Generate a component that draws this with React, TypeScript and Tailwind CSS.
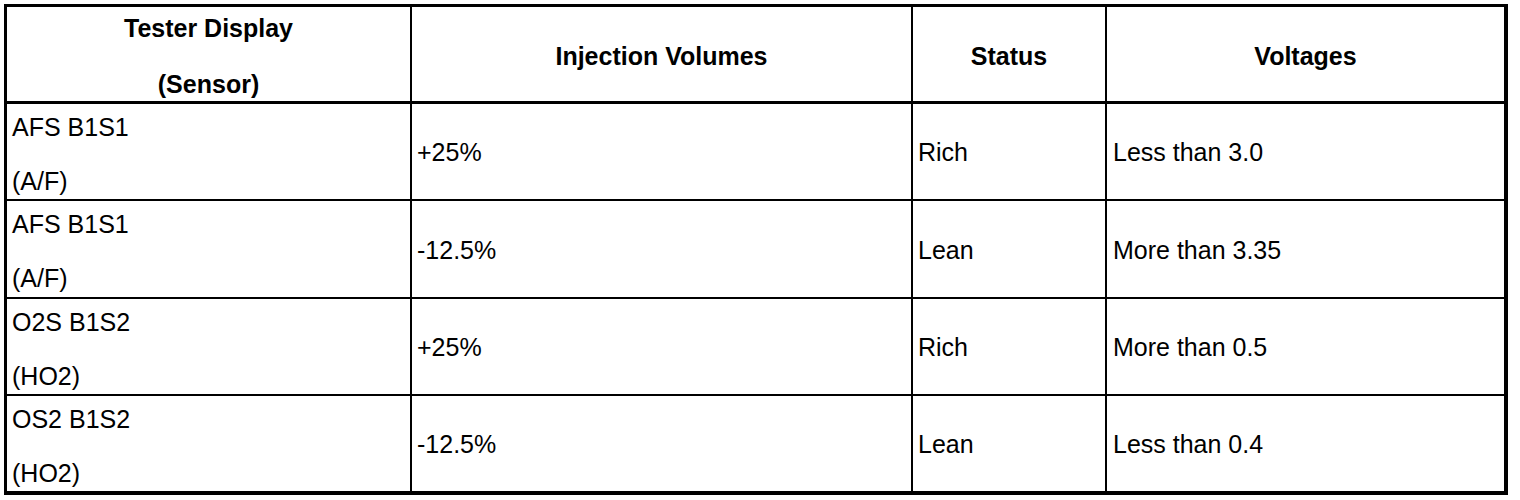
import React from "react";

type Row = { sensor: [string, string]; inj: string; status: string; volt: string };

const rows: Row[] = [
  { sensor: ["AFS B1S1", "(A/F)"], inj: "+25%", status: "Rich", volt: "Less than 3.0" },
  { sensor: ["AFS B1S1", "(A/F)"], inj: "-12.5%", status: "Lean", volt: "More than 3.35" },
  { sensor: ["O2S B1S2", "(HO2)"], inj: "+25%", status: "Rich", volt: "More than 0.5" },
  { sensor: ["OS2 B1S2", "(HO2)"], inj: "-12.5%", status: "Lean", volt: "Less than 0.4" },
];

export default function App() {
  return (
    <div className="w-[1520px] h-[500px] bg-white pt-[4px] pl-[4px] font-['Liberation_Sans',Arial,sans-serif] text-[25px] text-black">
      <div className="w-[1504px] border-l-[3px] border-t-[3px] border-r-[4px] border-b-[4px] border-black grid grid-cols-[405px_501px_194px_397px] grid-rows-[97px_97px_98px_97px_95px]">
        {/* header */}
        <div className="border-r-2 border-b-[3px] border-black flex flex-col items-center pt-[9px] gap-[31px] font-bold leading-[25px]">
          <div>Tester Display</div>
          <div>(Sensor)</div>
        </div>
        <div className="border-r-2 border-b-[3px] border-black flex items-center justify-center font-bold leading-[25px] pt-[4px]">
          Injection Volumes
        </div>
        <div className="border-r-2 border-b-[3px] border-black flex items-center justify-center font-bold leading-[25px] pt-[4px]">
          Status
        </div>
        <div className="border-b-[3px] border-black flex items-center justify-center font-bold leading-[25px] pt-[4px]">
          Voltages
        </div>
        {rows.map((r, i) => {
          const last = i === rows.length - 1;
          return (
            <React.Fragment key={i}>
              <div className={`border-r-2 border-black flex flex-col pl-[5px] pt-[11px] gap-[29px] leading-[25px] ${last ? "" : "border-b-2"}`}>
                <div>{r.sensor[0]}</div>
                <div>{r.sensor[1]}</div>
              </div>
              <div className={`border-r-2 border-black flex items-center pl-[5px] pt-[2px] leading-[25px] ${last ? "" : "border-b-2"}`}>
                {r.inj}
              </div>
              <div className={`border-r-2 border-black flex items-center pl-[5px] pt-[2px] leading-[25px] ${last ? "" : "border-b-2"}`}>
                {r.status}
              </div>
              <div className={`border-black flex items-center pl-[6px] pt-[2px] leading-[25px] ${last ? "" : "border-b-2"}`}>
                {r.volt}
              </div>
            </React.Fragment>
          );
        })}
      </div>
    </div>
  );
}
